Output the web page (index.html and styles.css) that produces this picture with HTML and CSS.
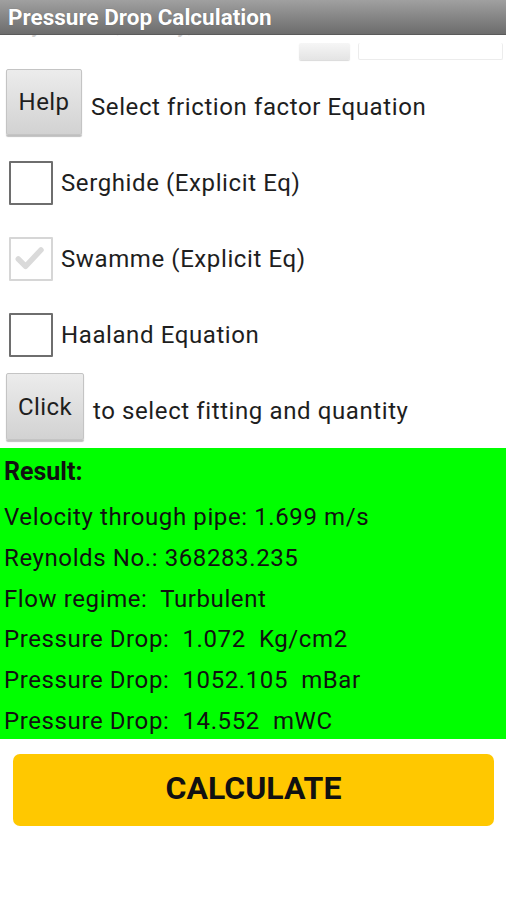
FILE: index.html
```html
<!DOCTYPE html>
<html>
<head>
<meta charset="utf-8">
<link rel="stylesheet" href="styles.css">
</head>
<body>
<div class="app">
  <header class="titlebar">Pressure Drop Calculation</header>
  <div class="toprow">
    <div class="clipped"><span>by Hazen, Darcy, Weisbach</span></div>
    <div class="minibtn"></div>
    <div class="field"></div>
  </div>
  <div class="row btnrow first">
    <button class="abtn help">Help</button>
    <span class="label">Select friction factor Equation</span>
  </div>
  <div class="row checkrow firstcheck">
    <span class="box"></span>
    <span class="label">Serghide (Explicit Eq)</span>
  </div>
  <div class="row checkrow">
    <span class="box checked">
      <svg viewBox="0 0 44 44" width="40" height="40"><path d="M8 22 L16 30 L33 12" fill="none" stroke="#dadada" stroke-width="6" stroke-linecap="round" stroke-linejoin="round"/></svg>
    </span>
    <span class="label">Swamme (Explicit Eq)</span>
  </div>
  <div class="row checkrow">
    <span class="box"></span>
    <span class="label">Haaland Equation</span>
  </div>
  <div class="row btnrow second">
    <button class="abtn click">Click</button>
    <span class="label">to select fitting and quantity</span>
  </div>
  <section class="result">
    <div class="rtitle">Result:</div>
    <div class="rline">Velocity through pipe: 1.699 m/s</div>
    <div class="rline">Reynolds No.: 368283.235</div>
    <div class="rline">Flow regime:&nbsp; Turbulent</div>
    <div class="rline">Pressure Drop:&nbsp; 1.072&nbsp; Kg/cm2</div>
    <div class="rline">Pressure Drop:&nbsp; 1052.105&nbsp; mBar</div>
    <div class="rline">Pressure Drop:&nbsp; 14.552&nbsp; mWC</div>
  </section>
  <button class="calc">CALCULATE</button>
</div>
</body>
</html>
```
FILE: styles.css
```css
* { box-sizing: border-box; }
html, body { margin: 0; padding: 0; background: #fff; }
body { font-family: Roboto, "Noto Sans", sans-serif; color: #1e1e1e; width: 506px; height: 900px; overflow: hidden; }
.app { display: flex; flex-direction: column; }

.titlebar {
  height: 35px;
  background: linear-gradient(#a0a0a0, #6c6c6c);
  border-bottom: 1px solid #5a5a5a;
  color: #fff;
  font-weight: bold;
  font-size: 22.5px;
  line-height: 35px;
  padding-left: 8px;
  text-shadow: 0 0 1px rgba(0,0,0,0.3);
}

.toprow {
  height: 27px;
  display: flex;
  align-items: flex-end;
  padding-bottom: 2px;
}
.clipped {
  width: 299px;
  height: 25px;
  overflow: hidden;
  align-self: flex-start;
}
.clipped span {
  display: block;
  white-space: nowrap;
  margin-top: -22px;
  padding-left: 18px;
  font-size: 22px;
  line-height: 24px;
  color: #cfcfcf;
  letter-spacing: 1px;
}
.minibtn {
  width: 51px;
  height: 17px;
  border-radius: 2px;
  background: linear-gradient(#f6f6f6, #e4e4e4);
  box-shadow: 0 1px 1px rgba(0,0,0,0.15);
}
.field {
  width: 145px;
  height: 17px;
  margin-left: 8px;
  border: 1px solid #ececec;
  border-top: none;
  border-radius: 2px;
}

.row { display: flex; align-items: center; }
.label { font-size: 24px; letter-spacing: 0.6px; color: #1e1e1e; white-space: nowrap; }
.btnrow .label { padding-top: 9px; }

.btnrow { padding-left: 6px; }
.btnrow.first { margin-top: 7px; height: 66px; }
.btnrow.second { height: 67px; }
.abtn {
  height: 66px;
  border: 1px solid #c4c4c4;
  border-radius: 2px;
  background: linear-gradient(#ececec, #d2d2d2);
  box-shadow: 0 2px 1px rgba(0,0,0,0.25);
  font-family: Roboto, "Noto Sans", sans-serif;
  font-size: 24px;
  letter-spacing: 0.4px;
  color: #1e1e1e;
  padding: 0;
  margin-right: 9px;
}
.help { width: 76px; }
.click { width: 78px; height: 67px; }

.checkrow { height: 76px; padding-left: 9px; }
.checkrow.firstcheck { margin-top: 10px; }
.box {
  width: 44px;
  height: 44px;
  border: 2px solid #6e6e6e;
  border-radius: 1px;
  margin-right: 8px;
  display: flex;
  align-items: center;
  justify-content: center;
}
.box.checked { border-color: #d6d6d6; }

.result {
  margin-top: 8px;
  height: 291px;
  background: #00ff00;
  padding: 6px 0 0 4px;
  color: #111;
}
.rtitle { font-weight: bold; font-size: 25px; line-height: 36px; margin-bottom: 7px; }
.rline { font-size: 24px; letter-spacing: 0.6px; line-height: 40.8px; white-space: nowrap; }

.calc {
  margin: 15px 12px 0 13px;
  height: 72px;
  border: none;
  border-radius: 7px;
  background: #ffc800;
  font-family: Roboto, "Noto Sans", sans-serif;
  font-weight: bold;
  font-size: 32px;
  color: #111;
  padding: 0 0 5px;
}
```
